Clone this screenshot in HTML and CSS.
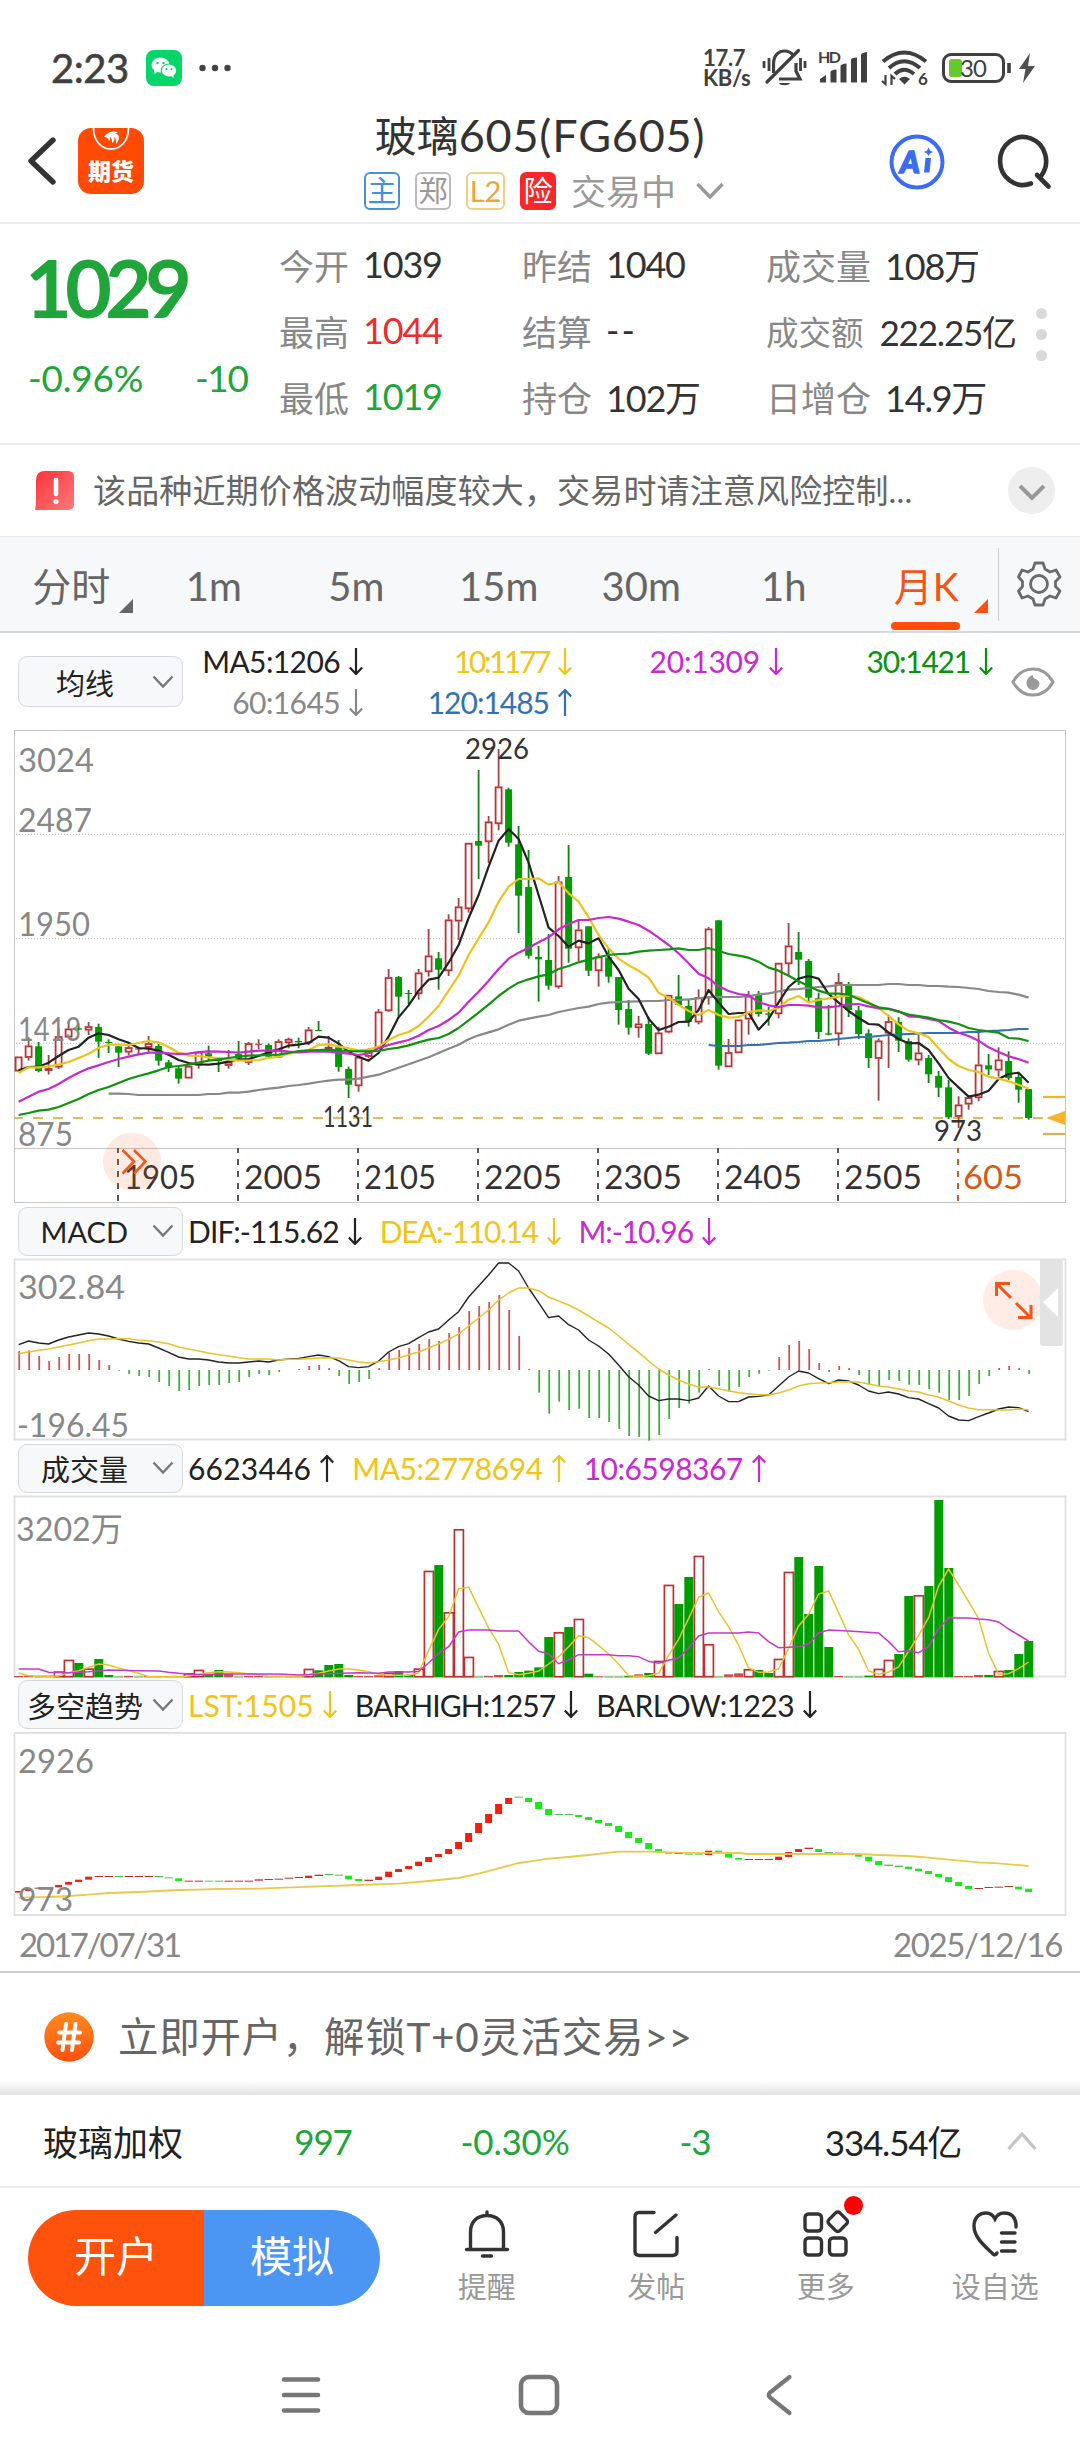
FILE: index.html
```html
<!DOCTYPE html>
<html lang="zh-CN">
<head>
<meta charset="utf-8">
<title>玻璃605(FG605)</title>
<link rel="stylesheet" href="styles.css">
</head>
<body>
<svg width="0" height="0" class="defs">
  <symbol id="down" viewBox="0 0 14 27"><path d="M7 0V26M.8 19.5L7 26L13.200 19.500" fill="none" stroke="currentColor" stroke-width="2.200"/></symbol>
  <symbol id="up" viewBox="0 0 14 27"><path d="M7 27V1M.8 7.500L7 1L13.200 7.500" fill="none" stroke="currentColor" stroke-width="2.200"/></symbol>
  <symbol id="chev" viewBox="0 0 22 14"><path d="M1.500 1.500L11 11.500L20.500 1.500" fill="none" stroke="currentColor" stroke-width="2.400"/></symbol>
</svg>

<div class="status">
  <span class="clock">2:23</span>
  <svg class="wechat" width="36" height="36" viewBox="0 0 36 36"><rect width="36" height="36" rx="8" fill="#04d669"/><g fill="#fff"><ellipse cx="14.500" cy="15" rx="9" ry="7.500"/><path d="M8 20L8.500 24L13 21z"/></g><ellipse cx="23" cy="20.500" rx="8.300" ry="7" fill="#04d669"/><ellipse cx="23" cy="20.500" rx="7.200" ry="6" fill="#fff"/><path d="M24 25L27.500 28L27.500 24z" fill="#fff"/><g fill="#04d669"><circle cx="11.500" cy="13" r="1.200"/><circle cx="17.500" cy="13" r="1.200"/><circle cx="20.500" cy="19" r="1"/><circle cx="25.500" cy="19" r="1"/></g></svg>
  <svg class="more-dots" width="32" height="8" viewBox="0 0 32 8" fill="#444"><circle cx="3.500" cy="4" r="3.200"/><circle cx="16" cy="4" r="3.200"/><circle cx="28.500" cy="4" r="3.200"/></svg>
  <div class="status-right">
    <span class="speed">17.7<br>KB/s</span>
    <svg class="mute" width="45" height="40" viewBox="0 0 45 40" fill="none" stroke="#404040" stroke-width="3.200"><path d="M11.500 25V16C11.500 8 16 3 22.500 3C26 3 29 4.500 31 7M34 15V23L38 31H17" /><path d="M5 34L36.500 2.500" stroke-linecap="round"/><path d="M2 13V20M7 10V23M38.500 10V23M43 13V20" stroke-width="2.800"/><path d="M17 35H28C27 38 18 38 17 35z" fill="#404040" stroke="none"/></svg>
    <svg class="signal" width="50" height="34" viewBox="0 0 50 34" fill="#404040"><text x="0" y="12" font-size="16" font-weight="700" textLength="23">HD</text><path d="M2 31.500V28L8 24V31.500zM12.500 31.500V21Q12.500 19 18.500 18.500V31.500zM22.500 31.500V15Q23 13 28.500 12.500V31.500zM33 31.500V8.500Q33 7 39 6.500V31.500zM43 31.500V4Q43 2 49 1V31.500z"/></svg>
    <svg class="wifi" width="48" height="36" viewBox="0 0 48 36" fill="none" stroke="#404040" stroke-width="4"><path d="M2 11.500Q23 -6.500 45 11.500M8 18Q23 4.500 39 18M14 24Q23 15.500 33 24"/><path d="M18 29Q23 24.500 29 29L23.500 34.500z" fill="#404040" stroke="none"/><path d="M4.500 25V34L1 31M10.500 35V26L14 29" stroke-width="2.200"/><text x="37" y="34.500" font-size="17" font-weight="700" fill="#404040" stroke="none">6</text></svg>
    <svg class="battery" width="70" height="31" viewBox="0 0 70 31"><rect x="1.500" y="1.500" width="60" height="27" rx="7.500" fill="none" stroke="#404040" stroke-width="3"/><rect x="7" y="6" width="13" height="18" rx="3" fill="#65c92c"/><path d="M67 10V20" stroke="#404040" stroke-width="3.600"/><text x="18" y="23.500" font-size="24" fill="#404040" textLength="27">30</text></svg>
    <svg class="bolt" width="18" height="30" viewBox="0 0 18 30"><path d="M12 0L1 16H7.500L5 30L17 13H10z" fill="#505050"/></svg>
  </div>
</div>

<header class="header">
  <div class="head-left">
    <svg width="30" height="50" viewBox="0 0 30 50"><path d="M26 4L4 25L26 46" fill="none" stroke="#333" stroke-width="5.400" stroke-linecap="round" stroke-linejoin="round"/></svg>
    <div class="app-icon">
      <svg width="40" height="24" viewBox="0 0 40 24"><path d="M2.500 0C2.500 28 37.500 28 37.500 0" fill="none" stroke="#fff" stroke-width="1.800"/><path d="M13 9C17 3 23 3 27 4L24 6C29 5 29 12 25 16C25 12 25 10 23 9C24 12 23 14 21 15C21 12 21 10 19 9C19 11 19 12 18 13C17 10 16 9 13 9z" fill="#fff"/></svg>
      <span>期货</span>
    </div>
  </div>
  <div class="head-mid">
    <h1>玻璃<span>605(FG605)</span></h1>
    <div class="tags">
      <span class="tag blue">主</span><span class="tag gray">郑</span><span class="tag gold">L2</span><span class="tag red">险</span>
      <span class="state">交易中</span>
      <svg width="28" height="18" viewBox="0 0 28 18"><path d="M1.500 2L14 15L26.500 2" fill="none" stroke="#999" stroke-width="3.400"/></svg>
    </div>
  </div>
  <div class="head-right">
    <svg width="56" height="56" viewBox="0 0 56 56"><circle cx="28" cy="28" r="25.500" fill="none" stroke="#3c6bf5" stroke-width="4"/><text x="11" y="38.500" font-size="30" font-weight="900" font-style="italic" fill="#3c6bf5" stroke="#3c6bf5" stroke-width="1.600">A</text><path d="M36.500 24H42L40.500 38.500H35z" fill="#3c6bf5"/><path d="M39.500 13.500L41 16.500L44 18L41 19.500L39.500 22L38 19.500L35 18L38 16.500z" fill="#3c6bf5"/></svg>
    <svg width="54" height="54" viewBox="0 0 54 54" fill="none" stroke="#333" stroke-width="4.600" stroke-linecap="round"><path d="M33 48.500A23 24 0 1 1 43 41"/><path d="M39 40L50.500 51.500"/></svg>
  </div>
</header>

<section class="quote">
  <div class="price">
    <div class="last">1029</div>
    <div class="change"><span>-0.96%</span><span>-10</span></div>
  </div>
  <dl class="stats">
    <div><dt>今开</dt><dd>1039</dd></div><div><dt>昨结</dt><dd>1040</dd></div><div><dt>成交量</dt><dd>108万</dd></div>
    <div><dt>最高</dt><dd class="up">1044</dd></div><div><dt>结算</dt><dd class="dash">--</dd></div><div class="tight"><dt>成交额</dt><dd>222.25亿</dd></div>
    <div><dt>最低</dt><dd class="dn">1019</dd></div><div><dt>持仓</dt><dd>102万</dd></div><div><dt>日增仓</dt><dd>14.9万</dd></div>
  </dl>
  <div class="vdots"><i></i><i></i><i></i></div>
</section>

<section class="notice">
  <svg width="40" height="41" viewBox="0 0 40 41"><defs><linearGradient id="rg" x1="0" y1="0" x2="1" y2="1"><stop offset="0" stop-color="#fb3338"/><stop offset="1" stop-color="#ff7a7a"/></linearGradient></defs><path d="M2 10Q2 1 11 1H34Q40 1 40 7V34Q40 40 34 40H1Q2 35 2 30z" fill="url(#rg)"/><path d="M22 10V24" stroke="#fff" stroke-width="4.600" stroke-linecap="round"/><circle cx="22" cy="31.500" r="2.600" fill="#fff"/></svg>
  <p>该品种近期价格波动幅度较大，交易时请注意风险控制...</p>
  <span class="round"><svg width="28" height="17" viewBox="0 0 28 17"><path d="M2 2L14 14L26 2" fill="none" stroke="#999" stroke-width="4"/></svg></span>
</section>

<nav class="tabs">
  <span class="tab corner">分时</span><span class="tab">1m</span><span class="tab">5m</span><span class="tab">15m</span><span class="tab">30m</span><span class="tab">1h</span><span class="tab corner on">月K</span>
  <span class="gear"><svg width="44" height="46" viewBox="0 0 44 46" fill="none" stroke="#6b6b6b" stroke-width="2.800" stroke-linejoin="round"><path d="M18 2H26L28 8L33 11L39 9L43 16L38.500 20.500V25.500L43 30L39 37L33 35L28 38L26 44H18L16 38L11 35L5 37L1.500 30L5.500 25.500V20.500L1.500 16L5 9L11 11L16 8z"/><circle cx="22" cy="23" r="8.500"/></svg></span>
</nav>

<div class="legend ma">
  <span class="pick">均线<svg width="22" height="14"><use href="#chev"/></svg></span>
  <div class="ma-grid">
    <span class="k">MA5:1206<svg><use href="#down"/></svg></span><span class="y a10">10:1177<svg><use href="#down"/></svg></span><span class="m a20">20:1309<svg><use href="#down"/></svg></span><span class="g a30">30:1421<svg><use href="#down"/></svg></span>
    <span class="s">60:1645<svg><use href="#down"/></svg></span><span class="b a120">120:1485<svg><use href="#up"/></svg></span>
  </div>
  <svg class="eye" width="44" height="30" viewBox="0 0 44 30"><path d="M2 15C7 6 14 2 22 2S37 6 42 15C37 24 30 28 22 28S7 24 2 15z" fill="none" stroke="#999" stroke-width="3"/><path d="M22 8C21 13 28 11 28.500 16.500A6.500 6.500 0 0 1 15.500 16.500C15.500 12 18.500 9 22 8z" fill="#999"/></svg>
</div>
<svg id="main" class="chart" width="1080" height="473" viewBox="0 730 1080 473"></svg>
<div class="legend">
  <span class="pick">MACD<svg width="22" height="14"><use href="#chev"/></svg></span>
  <span class="k dif">DIF:-115.62<svg><use href="#down"/></svg></span><span class="y dea">DEA:-110.14<svg><use href="#down"/></svg></span><span class="m mm">M:-10.96<svg><use href="#down"/></svg></span>
</div>
<svg id="macd" class="chart" width="1080" height="181" viewBox="0 1259 1080 181"></svg>
<div class="legend">
  <span class="pick">成交量<svg width="22" height="14"><use href="#chev"/></svg></span>
  <span class="k v1">6623446<svg><use href="#up"/></svg></span><span class="y v2">MA5:2778694<svg><use href="#up"/></svg></span><span class="m v3">10:6598367<svg><use href="#up"/></svg></span>
</div>
<svg id="vol" class="chart" width="1080" height="181" viewBox="0 1496 1080 181"></svg>
<div class="legend last-legend">
  <span class="pick">多空趋势<svg width="22" height="14"><use href="#chev"/></svg></span>
  <span class="y t1">LST:1505<svg><use href="#down"/></svg></span><span class="k t2">BARHIGH:1257<svg><use href="#down"/></svg></span><span class="k t3">BARLOW:1223<svg><use href="#down"/></svg></span>
</div>
<svg id="trend" class="chart" width="1080" height="184" viewBox="0 1732 1080 184"></svg>
<div class="dates"><span>2017/07/31</span><span>2025/12/16</span></div>

<div class="promo">
  <svg width="50" height="50" viewBox="0 0 50 50"><defs><linearGradient id="og" x1="0" y1="0" x2="0" y2="1"><stop offset="0" stop-color="#ff8a1f"/><stop offset="1" stop-color="#ff5010"/></linearGradient></defs><circle cx="25" cy="25" r="24.700" fill="url(#og)"/><path d="M22 12L18.500 38M31.500 12L28 38M15 20.500H36M14 30.500H35" stroke="#fff" stroke-width="4" stroke-linecap="round"/></svg>
  <p>立即开户，解锁T+0灵活交易&gt;&gt;</p>
</div>

<div class="index">
  <span class="name">玻璃加权</span><span class="dn">997</span><span class="dn pct">-0.30%</span><span class="dn">-3</span><span class="amt">334.54亿</span>
  <svg width="30" height="20" viewBox="0 0 30 20"><path d="M1.500 18L15 3L28.500 18" fill="none" stroke="#c4c4c4" stroke-width="3.200"/></svg>
</div>

<footer class="actions">
  <div class="buttons"><span class="open">开户</span><span class="sim">模拟</span></div>
  <div class="act"><svg width="46" height="48" viewBox="0 0 46 48" fill="none" stroke="#333" stroke-width="3.400" stroke-linecap="round"><path d="M23 2V5M6.500 38V22C6.500 11 14 5.500 23 5.500S39.500 11 39.500 22V38M2.500 39.500H43.500M18.500 46H27.500"/></svg>提醒</div>
  <div class="act"><svg width="46" height="48" viewBox="0 0 46 48" fill="none" stroke="#333" stroke-width="3.400" stroke-linecap="round"><path d="M21 2.500H6Q2 2.500 2 7V41Q2 45.500 6.500 45.500H39.500Q44 45.500 44 41V27.500M43 5L22.500 22.500"/></svg>发帖</div>
  <div class="act"><svg width="46" height="48" viewBox="0 0 46 48" fill="none" stroke="#333" stroke-width="3.400"><rect x="2" y="4" width="16.500" height="17" rx="3.500"/><rect x="2" y="28" width="16.500" height="17" rx="3.500"/><rect x="26.500" y="28" width="16.500" height="17" rx="3.500"/><rect x="27" y="4" width="15.500" height="15.500" rx="3" transform="rotate(45 34.750 11.750)"/></svg>更多<i class="dot"></i></div>
  <div class="act"><svg width="46" height="48" viewBox="0 0 46 48" fill="none" stroke="#333" stroke-width="3.400" stroke-linecap="round"><path d="M44 17V14C43 5 37 3 32 3C27 3 24.500 6 23 9C21.500 6 19 3 14 3C7 3 2 8 2 16C2 28 14 37 21 44Q23 46 25 43M29.500 23H43M29.500 32H43M29.500 41H43"/></svg>设自选</div>
</footer>

<div class="sysnav">
  <svg width="40" height="42" viewBox="0 0 40 42" stroke="#777" stroke-width="4.600" stroke-linecap="round"><path d="M3 5.500H37M3 21H37M3 36.500H37"/></svg>
  <svg class="home" width="42" height="42" viewBox="0 0 42 42"><rect x="3" y="3" width="36" height="36" rx="8" fill="none" stroke="#777" stroke-width="4.600"/></svg>
  <svg width="28" height="42" viewBox="0 0 28 42"><path d="M24.500 3L5 18.500Q2.500 21 5 23.500L24.500 39" fill="none" stroke="#777" stroke-width="4.200" stroke-linecap="round"/></svg>
</div>
<script src="charts.js"></script>
</body>
</html>
```
FILE: styles.css
```css
* { box-sizing: border-box; }
body { margin: 0; width: 1080px; height: 2460px; overflow: hidden; background: #fff; color: #333;
  font-family: Lato, "Noto Sans CJK SC", sans-serif; }
svg { display: block; flex: none; overflow: visible; }
svg text { font-family: Lato, "Noto Sans CJK SC", sans-serif; }
.defs { position: absolute; }
h1, p, dl, dd { margin: 0; font-weight: 400; }

.status { display: flex; align-items: center; height: 112px; padding: 24px 44px 0 51px; }
.clock { font-size: 40px; line-height: 44px; width: 95px; letter-spacing: -0.5px; color: #404040; -webkit-text-stroke: 0.6px #404040; }
.more-dots { margin-left: 17px; }
.status-right { display: flex; align-items: center; margin-left: auto; }
.speed { font-size: 22px; line-height: 20px; font-weight: 700; color: #404040; width: 59px; white-space: nowrap; letter-spacing: -0.3px; }
.signal { margin-left: 11px; }
.wifi { margin-left: 13px; }
.battery { margin-left: 13px; }
.bolt { margin-left: 6px; }

.header { display: flex; justify-content: space-between; height: 112px; border-bottom: 2px solid #ececec; }
.head-left { display: flex; align-items: center; width: 330px; padding: 0 0 12px 27px; gap: 21px; }
.app-icon { width: 66px; height: 66px; border-radius: 13px; background: #ff4a03; color: #fff; display: flex; flex-direction: column; align-items: center; }
.app-icon span { font-size: 23px; line-height: 28px; font-weight: 900; margin-top: 5px; }
.head-mid { display: flex; flex-direction: column; align-items: center; white-space: nowrap; }
h1 { font-size: 42px; line-height: 46px; color: #333; }
h1 span { font-size: 45px; letter-spacing: 0.8px; }
.tags { display: flex; align-items: center; height: 38px; margin-top: 13px; padding-left: 8px; }
.tag { width: 36px; height: 38px; border: 2px solid; border-radius: 6px; font-size: 29px; line-height: 33px; text-align: center; margin-right: 15px; }
.blue { color: #4a90d9; }
.gray { color: #999; border-color: #bbb; }
.gold { width: 39px; color: #e8a83a; border-color: #f1cd86; }
.red { color: #fff; background: #f9262b; border-color: #f9262b; }
.state { font-size: 35px; color: #999; margin-right: 20px; line-height: 38px; }
.head-right { display: flex; align-items: center; justify-content: flex-end; gap: 53px; width: 330px; padding: 0 28px 11px 0; }

.quote { display: flex; height: 221px; border-bottom: 2px solid #ececec; }
.price { width: 280px; padding-left: 28px; color: #20a53a; }
.last { font-size: 81px; line-height: 90px; margin: 18px 0 0 -3px; font-weight: 700; letter-spacing: -7px; }
.change { display: flex; font-size: 37px; line-height: 44px; margin-top: 24px; letter-spacing: -0.2px; }
.change span:first-child { width: 167px; }
.change span:last-child { letter-spacing: -1.4px; }
.stats { display: grid; grid-template-columns: 243px 244px 262px; grid-template-rows: repeat(3, 66px); padding-top: 7px; margin-left: -1px; margin-right: 1px; white-space: nowrap; }
.stats div { display: flex; align-items: center; gap: 14px; font-size: 35px; }
.stats dt { color: #888; }
.stats dd { font-size: 36px; letter-spacing: -1.2px; }
.stats .dash { letter-spacing: 2px; }
.stats .tight { gap: 16px; }
.stats .tight dt { font-size: 32.500px; }
.stats .tight dd { font-size: 35px; letter-spacing: -1.2px; }
.stats .up { color: #ef2b2b; }
.stats .dn, .dn { color: #20a53a; }
.vdots { display: flex; flex-direction: column; gap: 10px; padding: 84px 0 0 7px; }
.vdots i { width: 11px; height: 11px; border-radius: 50%; background: #d9d9d9; }

.notice { display: flex; align-items: center; height: 91px; padding: 0 25px 0 34px; }
.notice p { font-size: 33px; color: #666; margin: -3px 0 0 19px; flex: 1; white-space: nowrap; letter-spacing: 0.15px; }
.round { width: 47px; height: 47px; border-radius: 50%; background: #eee; display: grid; place-items: center; padding-top: 3px; }

.tabs { display: flex; align-items: center; height: 97px; background: #f6f8fa; border-top: 1px solid #e8eaec; border-bottom: 2px solid #d6d8da; }
.tab { width: 142.500px; font-size: 40px; text-align: center; line-height: 98px; height: 94px; color: #666; position: relative; }
.tab:first-child { font-size: 39px; }
.corner::after { content: ""; position: absolute; right: 10px; top: 62px; border-left: 14px solid transparent; border-bottom: 14px solid #666; }
.on { color: #fa5214; font-size: 39px; }
.on::after { border-bottom-color: #fa5214; }
.on::before { content: ""; position: absolute; left: 36px; bottom: 1px; width: 69px; height: 8px; border-radius: 4px; background: #ff4e0a; }
.gear { display: grid; place-items: center; flex: 1; height: 73px; border-left: 1px solid #ccc; }

.legend { display: flex; align-items: center; height: 56px; padding-left: 18px; font-size: 30px; white-space: nowrap; letter-spacing: -0.6px; }
.legend > span:not(.pick), .ma-grid span { display: flex; align-items: center; }
.legend span > svg { width: 14px; height: 27px; margin-left: 9px; }
.legend > span + span { margin-left: 18px; }
.legend > .pick + span { margin-left: 5px; }
.pick { width: 165px; height: 49px; border: 1px solid #d6d8dc; border-radius: 9px; background: #f6f8fa; display: flex; align-items: center; justify-content: flex-end; padding-right: 8px; color: #222; font-size: 29px; letter-spacing: 0; }
.legend .pick > svg { width: 22px; height: 14px; color: #777; margin-left: 24px; }
.last-legend { height: 55px; }
.last-legend .pick > svg { margin-left: 9px; }
.legend .dif { letter-spacing: -0.9px; }
.legend .dea { letter-spacing: -1.4px; }
.legend .mm { letter-spacing: -1.1px; }
.legend .v1 { letter-spacing: 0.2px; }
.legend .v2 { letter-spacing: -0.4px; }
.legend .v3 { letter-spacing: -0.5px; }
.legend .t1 { letter-spacing: 0.1px; }
.legend .t2 { letter-spacing: -0.9px; }
.a10 { letter-spacing: -2.4px; }
.a20 { letter-spacing: -0.2px; }
.a30 { letter-spacing: -1.2px; }
.a120 { letter-spacing: -1px; }
.k { color: #222; }
.y { color: #f0c419; }
.m { color: #cb27d2; }
.g { color: #089308; }
.s { color: #888; }
.b { color: #3470b4; }
.ma { height: 97px; }
.ma .pick { height: 51px; }
.ma .pick > svg { margin-left: 38px; }
.ma-grid { display: grid; grid-template-columns: 180px 209px 211px 210px; grid-auto-rows: 41px; }
.ma-grid span { justify-content: flex-end; }
.eye { margin-left: 18px; }

.dates { display: flex; justify-content: space-between; height: 57px; padding: 0 18px 0 19px; align-items: center; font-size: 33px; color: #888; border-bottom: 2px solid #ccc; letter-spacing: -2.2px; }
.dates span:last-child { letter-spacing: -1.4px; }
.promo { display: flex; align-items: center; height: 122px; padding: 5px 44px 0; background: linear-gradient(#fff 0 108px, #e2e2e2 122px); }
.promo p { font-size: 40.500px; color: #666; margin: -5px 0 0 24px; letter-spacing: 0.7px; }
.index { display: grid; grid-template-columns: 226px 194px 190px 170px 226px 32px; justify-items: center; align-items: center; height: 93px; font-size: 35px; border-bottom: 2px solid #ececec; color: #222; letter-spacing: -1.2px; }
.index .name { letter-spacing: 0; }
.index .pct { letter-spacing: -0.2px; }

.actions { display: flex; height: 142px; padding: 22px 0 0 28px; }
.buttons { display: flex; width: 352px; height: 96px; border-radius: 48px; overflow: hidden; color: #fff; font-size: 42px; line-height: 92px; text-align: center; margin-right: 22px; }
.buttons span { flex: 1; }
.open { background: #ff530d; }
.sim { background: #4b96f3; }
.act { width: 169.500px; display: flex; flex-direction: column; align-items: center; font-size: 29px; line-height: 36px; color: #999; gap: 11px; position: relative; }
.dot { position: absolute; width: 19px; height: 19px; border-radius: 50%; background: #fe0000; left: 103px; top: -14px; }
.sysnav { display: flex; justify-content: center; align-items: center; height: 130px; padding-right: 6px; }
.home { margin: 0 205px 0 197px; }
```
FILE: charts.js
```js
// One slot per month; vertical values are in device thirds below each pane's base.
const X = i => 18.6 + 10 * i;
const RED = '#bc3232', GREEN = '#009c00';
const px = n => n.toFixed(2);
const rect = (x, y, w, h, fill, extra = '') =>
  `<rect x="${px(x)}" y="${px(y)}" width="${px(w)}" height="${px(h)}" fill="${fill}" ${extra}/>`;
const line = (x1, y1, x2, y2, c, w, extra = '') =>
  `<line x1="${px(x1)}" y1="${px(y1)}" x2="${px(x2)}" y2="${px(y2)}" stroke="${c}" stroke-width="${w}" ${extra}/>`;
const text = (s, x, y, w, size, c) =>
  `<text x="${x}" y="${y}" font-size="${size}" fill="${c}" textLength="${w}" lengthAdjust="spacingAndGlyphs">${s}</text>`;
const dense = (base, start, vals, c, w) =>
  `<polyline fill="none" stroke="${c}" stroke-width="${w}" stroke-linejoin="round" points="${vals.map((v, k) => px(X(start + k)) + ',' + px(base + v / 3)).join(' ')}"/>`;
const sparse = (base, str, c, w) =>
  `<polyline fill="none" stroke="${c}" stroke-width="${w}" points="${str.split(' ').map(p => { const [i, v] = p.split(':'); return px(X(+i)) + ',' + px(base + v / 3); }).join(' ')}"/>`;

// kind, high, body top, body bottom, low
const candles = `R 1010 1010 1054 1054|R 952 977 1013 1022|G 966 979 1053 1057|R 1005 1045 1051 1064|R 925 949 1042 1047|R 905 926 952 955|G 910 925 929 932|R 906 919 931 945|G 911 921 965 1014|G 958 966 968 999|G 979 979 998 1041|R 970 982 997 1006|R 980 985 987 1003|R 948 970 983 998|G 972 978 1022 1037|G 1020 1027 1043 1056|G 1040 1045 1076 1091|R 1038 1038 1075 1075|R 996 996 1036 1046|G 977 1000 1010 1022|G 1012 1020 1022 1056|R 990 1026 1037 1046|G 963 1002 1015 1022|R 966 970 1028 1035|R 958 971 974 987|G 970 975 1010 1012|R 958 964 1012 1014|R 953 957 969 985|G 953 963 967 985|R 921 929 969 975|G 903 930 932 933|R 948 981 988 995|G 960 982 1041 1055|G 1040 1047 1094 1134|R 1011 1011 1098 1115|R 985 990 1010 1015|R 867 875 985 985|R 747 772 873 875|G 768 771 830 890|G 810 819 822 852|R 747 758 822 839|R 627 707 756 770|G 696 715 749 809|R 583 599 753 768|R 534 560 604 660|R 369 369 567 578|G 150 363 377 477|R 288 305 366 429|R 87 200 312 331|G 203 208 368 380|G 318 373 527 639|G 390 501 707 716|G 678 711 718 845|G 642 720 797 809|R 468 485 801 806|G 375 471 686 728|R 599 629 684 724|G 619 619 752 768|R 700 710 753 800|G 685 712 770 788|G 771 771 870 914|G 840 867 923 944|R 888 911 924 953|G 890 912 1001 1005|R 920 938 1002 1002|R 825 825 937 940|G 765 829 855 857|G 840 858 906 920|R 808 832 907 913|R 621 626 834 854|G 601 601 1037 1049|R 957 997 1041 1041|R 899 899 999 999|R 813 828 898 944|G 813 822 882 890|G 860 880 884 917|R 729 729 882 895|R 609 677 732 768|G 636 696 719 795|G 717 723 833 845|G 818 835 936 957|G 855 940 944 946|R 759 787 942 977|G 786 792 870 891|G 858 871 942 957|G 928 940 1014 1044|R 955 962 1016 1142|R 884 904 940 1044|G 891 906 962 996|G 955 963 1019 1025|R 945 998 1021 1036|G 1005 1014 1063 1089|G 1053 1068 1103 1131|G 1080 1102 1192 1197|R 1129 1154 1190 1224|R 1125 1132 1153 1169|R 938 1034 1134 1144|G 1002 1036 1048 1065|R 982 1019 1051 1070|G 994 1023 1074 1080|G 1062 1071 1109 1148|G 1107 1107 1194 1199`
  .split('|').map(s => { const a = s.split(' '); return [a[0], ...a.slice(1).map(Number)]; });

const ma5 = [1051,1041,1040,1028,1008,990,980,953,940,945,958,968,984,986,992,1004,1020,1029,1033,1034,1031,1024,1018,1017,1008,997,988,977,974,969,950,953,971,995,1010,1022,999,950,892,856,812,779,773,728,675,594,525,440,362,327,357,428,525,623,648,680,662,670,655,710,750,806,837,896,930,920,906,905,870,810,848,882,879,879,929,897,847,801,776,768,776,822,848,873,894,912,914,938,957,970,969,990,1030,1074,1102,1130,1124,1112,1077,1062,1058,1088];
const ma10 = [1059,1042,1042,1039,1034,1026,1014,1001,984,974,974,975,969,963,967,981,998,1007,1008,1012,1014,1019,1022,1022,1020,1014,1010,1001,996,990,975,973,979,985,991,989,980,960,945,936,918,890,858,812,767,705,655,607,545,500,477,477,475,494,486,520,545,592,645,685,716,736,752,773,818,833,855,873,885,870,885,893,891,877,871,873,863,839,828,847,840,835,830,826,831,846,864,888,913,932,940,951,985,1017,1038,1050,1056,1070,1076,1084,1094,1106];
const ma20 = [1145,1130,1115,1107,1092,1074,1058,1045,1036,1026,1017,1010,1003,998,998,1000,1002,1001,996,994,995,996,998,995,992,992,992,995,997,995,994,995,998,1001,1005,1000,985,975,967,960,947,930,918,900,878,845,815,782,747,716,698,683,667,652,628,612,600,600,594,591,596,605,615,632,653,675,700,730,761,775,799,813,822,826,846,856,861,855,855,857,862,862,858,853,852,859,865,866,874,889,891,897,903,923,938,948,962,982,996,1009,1017,1028];
const ma30 = [1185,1179,1172,1169,1161,1149,1137,1122,1110,1101,1089,1077,1068,1060,1051,1041,1038,1034,1028,1022,1018,1014,1010,1007,1006,1005,1004,999,993,991,990,989,992,993,994,994,993,987,983,976,967,959,954,942,924,901,878,854,828,806,788,778,769,763,747,738,727,719,711,705,702,701,695,692,690,688,685,690,690,684,693,702,707,713,725,743,752,767,784,798,812,821,821,824,837,850,862,867,875,884,888,893,900,905,912,924,930,934,938,954,956,963];
const ma60 = [1121,1121,1122,1125,1125,1125,1125,1125,1125,1125,1122,1122,1118,1118,1115,1110,1106,1103,1098,1095,1091,1086,1082,1079,1079,1076,1070,1064,1054,1043,1033,1022,1012,999,986,974,958,946,937,928,914,902,896,890,885,876,870,864,860,852,848,846,845,844,843,843,840,840,838,835,831,831,831,831,828,824,820,814,809,807,804,801,799,795,795,795,795,795,792,792,795,795,798,798,800,801,804,807,813,816,818,824,833];
const ma120 = [975,978,978,978,975,975,972,969,968,966,963,963,960,957,954,951,951,948,945,943,942,941,939,939,939,939,936,936,933,932,930,927,927];

function drawMain() {
  const B = 720, y = v => B + v / 3;
  let s = '';
  for (const g of [834.3, 938.7, 1043.3]) s += line(16, g, 1064, g, '#b8b8b8', 1, 'stroke-dasharray="1 2"');
  s += `<path d="M14.500 730.500H1065.500V1203M14.500 730V1202.500H1065.500M14.500 1148.500H1065.500" fill="none" stroke="#c4c4c4"/>`;
  s += line(14, 1118, 1044, 1118, '#e8b84a', 2.2, 'stroke-dasharray="10 10" stroke-dashoffset="1"');
  candles.forEach(([k, h, t, b, l], i) => {
    const x = X(i), c = k === 'R' ? '#a04444' : '#128012';
    if (k === 'G') {
      s += line(x, y(h), x, y(l), c, 1.8);
      s += rect(x - 3.5, y(t), 7, Math.max(1, (b - t) / 3), GREEN);
    } else {
      s += line(x, y(h), x, y(t), c, 1.8) + line(x, y(b), x, y(l), c, 1.8);
      if (b - t < 5) s += rect(x - 3.5, y(t), 7, 1.2, RED);
      else s += rect(x - 3, y(t) + .7, 6, Math.max(1, (b - t) / 3 - 1.4), '#fff', `stroke="${RED}" stroke-width="1.800"`);
    }
  });
  s += dense(B, 9, ma60, '#888', 2.2) + dense(B, 69, ma120, '#3570b2', 2.2) + dense(B, 0, ma5, '#222', 2.2);
  s += dense(B, 0, ma10, '#ecc31d', 2.2) + dense(B, 0, ma20, '#c928d0', 2.2) + dense(B, 0, ma30, '#0d930d', 2.2);
  [['3024', 772, 76], ['2487', 832, 74], ['1950', 936, 72], ['1413', 1041, 63], ['875', 1146, 55]]
    .forEach(([t, ty, w]) => s += text(t, 18, ty, w, 33.5, '#888'));
  s += text('2926', 465, 759, 64, 29, '#333') + text('1131', 323, 1127, 50, 29, '#333') + text('973', 934, 1141, 48, 29, '#333');
  ['1905', '2005', '2105', '2205', '2305', '2405', '2505', '605'].forEach((t, n) => {
    const x = 118 + 120 * n, last = n === 7, c = last ? '#d45a17' : '#333';
    s += line(x, 1148, x, 1203, last ? '#bd6020' : '#555', 2, 'stroke-dasharray="6 6" stroke-dashoffset="1"');
    s += text(t, x + (last ? 5 : 6), 1189, [72, 78, 72, 78, 78, 78, 78, 60][n], 33.5, c);
  });
  s += line(1043, 1097, 1065, 1097, '#ecb23a', 2.2) + line(1043, 1134, 1065, 1134, '#ddb04a', 2.2);
  s += '<path d="M1046 1118L1065 1111V1125z" fill="#fbb32c"/>';
  s += '<circle cx="132" cy="1161.500" r="29" fill="#ff6a30" fill-opacity=".14"/><path d="M122.500 1150L134 1161.500L122.500 1173.500M134 1150L145.500 1161.500L134 1173.500" fill="none" stroke="#f4571c" stroke-width="2.600"/>';
  document.getElementById('main').innerHTML = s;
}

function drawMacd() {
  const B = 1200;
  let s = '<path d="M14.500 1259.500H1065.500V1439.500H14.500z" fill="none" stroke="#e0e0e0" stroke-width="1.800"/>';
  const bars = [453,451,468,483,471,462,462,462,480,495,512,522,528,531,546,558,573,570,558,555,555,549,546,531,522,525,516,510,507,498,495,504,528,552,546,537,504,457,450,444,432,417,423,399,381,333,318,306,285,330,408,507,578,641,605,630,626,654,654,666,687,708,711,722,705,657,624,611,578,507,558,575,561,531,521,512,471,435,423,447,489,516,498,504,525,554,558,540,543,554,555,567,578,600,600,588,552,528,504,498,504,522];
  bars.forEach((v, i) => { if (v !== 510) s += line(X(i) + .6, 1370, X(i) + .6, B + v / 3, v < 510 ? '#ca5656' : '#3fae3f', 1.8); });
  s += dense(B, 0, [434,423,429,432,420,411,405,399,402,408,417,424,429,432,444,457,471,477,477,480,486,489,489,486,483,486,480,477,475,470,465,470,482,500,503,500,483,456,440,431,413,396,387,360,335,291,258,225,189,189,213,264,308,353,348,374,390,420,438,462,495,530,555,588,602,597,597,602,594,558,588,605,605,591,589,585,558,531,513,519,536,551,540,543,555,573,581,576,582,593,597,611,624,648,660,662,650,639,627,621,623,635], '#222', 1.4);
  s += dense(B, 0, [461,456,451,447,441,435,429,422,417,417,416,416,420,422,426,431,441,447,453,459,464,468,473,477,477,477,480,478,478,476,474,473,474,480,486,489,485,480,474,464,456,444,432,418,402,378,354,330,300,279,264,264,272,291,303,315,330,348,366,384,408,433,457,483,507,525,540,552,561,561,566,572,578,581,584,585,579,570,558,551,549,548,546,545,546,552,558,561,567,573,576,585,591,603,615,624,629,629,630,630,627,629], '#eac12e', 1.5);
  s += text('302.84', 18, 1299, 107, 33.5, '#888') + text('-196.45', 17, 1437, 112, 33.5, '#888');
  s += '<circle cx="1013" cy="1300" r="30" fill="#ffece6"/><path d="M1040 1260H1060Q1063 1260 1063 1263V1343Q1063 1346 1060 1346H1043Q1040 1346 1040 1343z" fill="#e3e3e3"/><path d="M1043 1302.500L1058 1288V1317z" fill="#fff"/>';
  s += '<path d="M1011 1298L997 1284M996.500 1296V1283.500H1010M1016 1303L1030 1317M1031 1305V1317.500H1018" fill="none" stroke="#f95316" stroke-width="3"/>';
  document.getElementById('macd').innerHTML = s;
}

function drawVol() {
  const B = 1200;
  let s = '<path d="M14.500 1496.500H1065.500V1676.500H14.500z" fill="none" stroke="#e0e0e0" stroke-width="1.800"/>';
  const tops = [1428,1427,1430,1427,1414,1379,1389,1405,1377,1425,1430,1428,1430,1428,1429,1429,1430,1419,1409,1424,1410,1421,1430,1428,1428,1430,1430,1430,1428,1406,1411,1395,1392,1425,1428,1428,1426,1418,1413,1424,1405,1112,1095,1236,987,1370,1430,1428,1425,1425,1416,1412,1402,1311,1296,1281,1256,1421,1429,1430,1430,1428,1423,1419,1382,1154,1212,1131,1067,1332,1430,1423,1420,1407,1410,1419,1376,1115,1071,1242,1098,1341,1428,1430,1430,1427,1406,1379,1362,1188,1185,1158,900,1104,1428,1428,1425,1425,1412,1410,1362,1323];
  const reds = new Set([0,1,3,4,5,7,11,13,14,17,18,21,23,24,26,29,34,35,36,37,40,41,43,44,45,47,48,54,56,58,62,64,65,68,69,71,72,73,76,77,82,86,87,90,94,95,96,98]);
  tops.forEach((v, i) => {
    const x = X(i), t = B + v / 3, h = 1677.3 - t;
    if (!reds.has(i)) s += rect(x - 4.3, t, 9, h, GREEN);
    else if (h < 4) s += rect(x - 4.5, t, 9, h, '#c65050');
    else s += rect(x - 4.2, t + .8, 9, h - 1.4, '#fff', `stroke="${RED}" stroke-width="1.700"`);
  });
  s += sparse(B, '0:1419 1:1427 3:1429 4:1428 5:1418 6:1412 7:1402 8:1392 9:1395 10:1404 11:1412 12:1420 13:1430 16:1430 17:1428 18:1422 19:1418 20:1415 21:1416 22:1418 23:1421 24:1424 25:1428 28:1430 29:1424 30:1420 31:1413 32:1407 33:1407 34:1410 35:1415 36:1422 37:1426 39:1426 40:1419 41:1352 42:1288 43:1250 44:1167 45:1161 46:1223 47:1284 48:1332 49:1418 50:1424 51:1420 52:1413 53:1392 54:1370 55:1340 56:1307 57:1313 58:1336 59:1362 60:1392 61:1427 62:1429 63:1427 64:1420 65:1366 66:1318 67:1256 68:1192 69:1179 70:1235 71:1280 72:1336 73:1404 74:1417 75:1416 76:1407 77:1345 78:1278 79:1243 80:1182 81:1173 82:1238 83:1305 84:1348 85:1413 86:1423 87:1416 88:1401 89:1354 90:1306 91:1253 92:1158 93:1107 94:1155 95:1205 96:1256 97:1360 98:1423 99:1421 100:1406 101:1386', '#eac12e', 1.5);
  s += sparse(B, '0:1407 2:1407 3:1417 5:1418 7:1415 9:1410 12:1412 14:1413 15:1417 16:1420 18:1424 20:1422 26:1422 28:1425 30:1422 34:1418 36:1420 37:1416 39:1416 40:1414 41:1389 42:1360 43:1340 44:1296 45:1290 47:1290 48:1293 50:1293 51:1325 52:1354 53:1361 54:1391 55:1380 56:1364 59:1364 60:1367 61:1367 62:1370 63:1384 64:1390 65:1381 66:1374 67:1343 68:1308 69:1299 72:1299 73:1296 74:1299 75:1325 76:1343 78:1340 79:1332 80:1299 81:1290 83:1293 86:1299 87:1325 88:1355 89:1352 90:1358 91:1340 92:1286 93:1254 95:1254 96:1257 97:1259 98:1266 99:1287 100:1305 101:1323', '#c538c8', 1.5);
  s += text('3202万', 16, 1541, 107, 33.5, '#888');
  document.getElementById('vol').innerHTML = s;
}

function drawTrend() {
  const B = 1680;
  let s = '<path d="M14.500 1733H1065.500V1916M14.500 1733V1915H1065.500" fill="none" stroke="#e0e0e0" stroke-width="1.800"/>';
  const seg = `R633-638 R627-633 R623-626 R623-626 R615-622 R606-614 R599-606 R590-599 R588-591 R588-591 G588-591 R588-591 R588-591 R588-591 G588-592 G592-595 G595-603 R602-605 R602-605 G602-605 G602-605 R602-605 R602-605 R602-605 R598-602 R597-600 R596-599 R593-596 R591-594 R587-594 R584-588 G582-585 G584-587 G587-598 G597-603 R599-603 R590-600 R575-591 R567-576 R558-567 R545-558 R531-546 R522-531 R507-522 R486-507 R459-486 R429-459 R402-429 R372-402 R354-372 G350-353 G354-366 G366-387 G387-405 G402-405 G402-405 G405-411 G411-420 G420-429 G429-438 G438-456 G456-474 G474-489 G489-507 G507-518 G516-521 R519-522 G521-524 G521-524 R512-525 G512-518 G520-533 G534-539 R537-540 R537-540 R537-540 R530-540 R516-531 R507-516 R503-507 G507-516 G516-520 R518-521 G519-522 G522-530 G530-543 G543-555 G554-558 G557-561 G560-567 G566-573 G573-582 G582-591 G591-606 G606-618 G618-627 R624-627 R621-624 R620-623 R618-621 G620-628 G626-636`.split(' ');
  seg.forEach((p, i) => {
    const [a, b] = p.slice(1).split('-').map(Number);
    const thin = b - a < 5;
    s += rect(X(i) - (thin ? 4 : 3.5), B + a / 3, thin ? 8.5 : 7, (b - a) / 3, p[0] === 'R' ? (thin ? '#b8352c' : '#f41f0c') : (thin ? '#4cc34c' : '#12ee12'));
  });
  s += sparse(B, '0:654 1:652 3:651 5:648 7:644 9:639 12:636 16:630 18:629 20:627 24:626 30:619 34:615 38:611 41:603 44:594 46:581 48:565 50:549 51:545 53:536 55:531 57:525 60:515 63:515 66:518 72:519 73:522 84:522 86:525 89:528 91:533 93:539 96:547 98:550 101:558', '#e9c94a', 1.8);
  s += text('2926', 18, 1773, 76, 33.5, '#888') + text('973', 18, 1911, 55, 33.5, '#888');
  document.getElementById('trend').innerHTML = s;
}

drawMain();
drawMacd();
drawVol();
drawTrend();
```
